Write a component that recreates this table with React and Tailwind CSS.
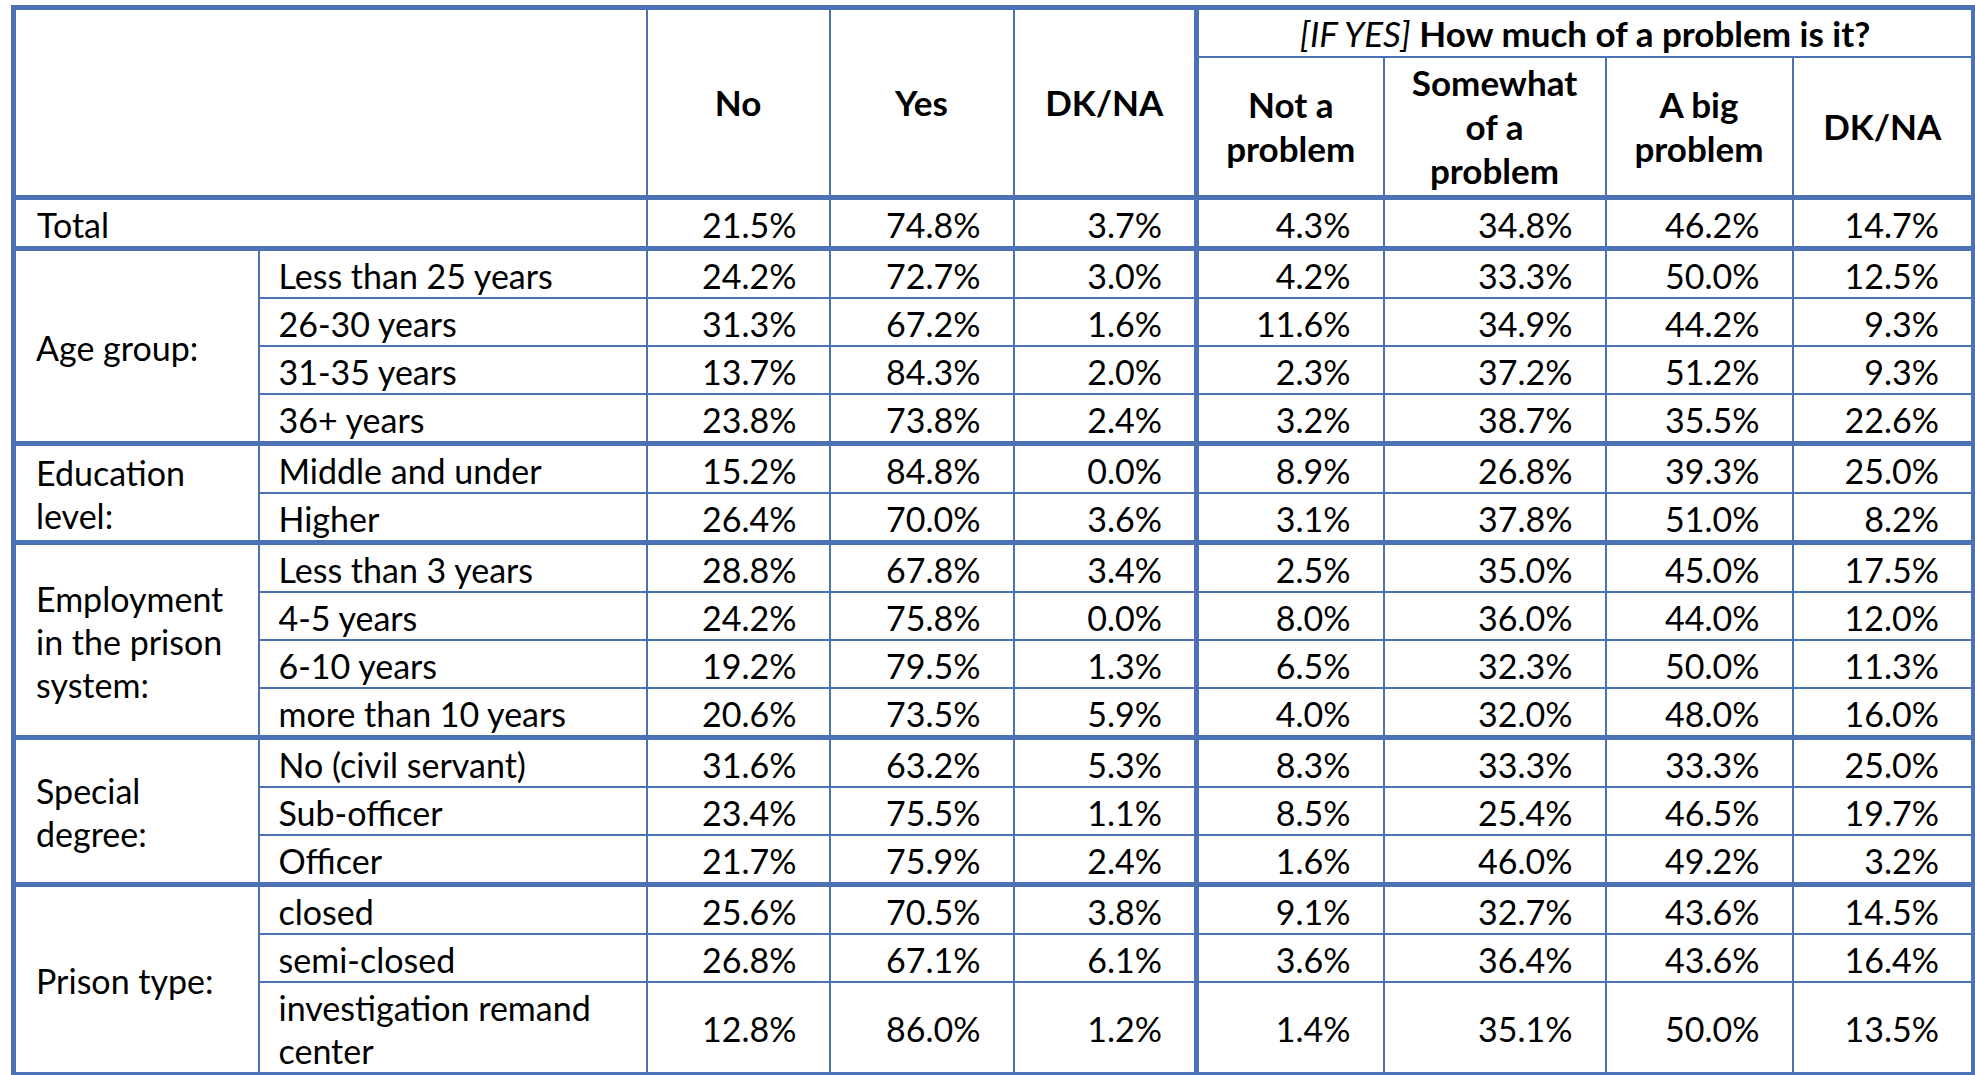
import React from "react";

const groups = [
  {
    label: ["Age group:"],
    rows: [
      ["Less than 25 years", "24.2%", "72.7%", "3.0%", "4.2%", "33.3%", "50.0%", "12.5%"],
      ["26-30 years", "31.3%", "67.2%", "1.6%", "11.6%", "34.9%", "44.2%", "9.3%"],
      ["31-35 years", "13.7%", "84.3%", "2.0%", "2.3%", "37.2%", "51.2%", "9.3%"],
      ["36+ years", "23.8%", "73.8%", "2.4%", "3.2%", "38.7%", "35.5%", "22.6%"],
    ],
  },
  {
    label: ["Education", "level:"],
    rows: [
      ["Middle and under", "15.2%", "84.8%", "0.0%", "8.9%", "26.8%", "39.3%", "25.0%"],
      ["Higher", "26.4%", "70.0%", "3.6%", "3.1%", "37.8%", "51.0%", "8.2%"],
    ],
  },
  {
    label: ["Employment", "in the prison", "system:"],
    rows: [
      ["Less than 3 years", "28.8%", "67.8%", "3.4%", "2.5%", "35.0%", "45.0%", "17.5%"],
      ["4-5 years", "24.2%", "75.8%", "0.0%", "8.0%", "36.0%", "44.0%", "12.0%"],
      ["6-10 years", "19.2%", "79.5%", "1.3%", "6.5%", "32.3%", "50.0%", "11.3%"],
      ["more than 10 years", "20.6%", "73.5%", "5.9%", "4.0%", "32.0%", "48.0%", "16.0%"],
    ],
  },
  {
    label: ["Special", "degree:"],
    rows: [
      ["No (civil servant)", "31.6%", "63.2%", "5.3%", "8.3%", "33.3%", "33.3%", "25.0%"],
      ["Sub-officer", "23.4%", "75.5%", "1.1%", "8.5%", "25.4%", "46.5%", "19.7%"],
      ["Officer", "21.7%", "75.9%", "2.4%", "1.6%", "46.0%", "49.2%", "3.2%"],
    ],
  },
  {
    label: ["Prison type:"],
    rows: [
      ["closed", "25.6%", "70.5%", "3.8%", "9.1%", "32.7%", "43.6%", "14.5%"],
      ["semi-closed", "26.8%", "67.1%", "6.1%", "3.6%", "36.4%", "43.6%", "16.4%"],
      [["investigation remand", "center"], "12.8%", "86.0%", "1.2%", "1.4%", "35.1%", "50.0%", "13.5%"],
    ],
  },
];

const total = ["21.5%", "74.8%", "3.7%", "4.3%", "34.8%", "46.2%", "14.7%"];

// cell base: thin blue rule, text sits a touch low on a 43px line
const cell = "border-2 border-[#4a72b5] px-0 pt-[3px] pb-0 leading-[43px]";
const num = `${cell} text-right pr-[32px]`;
const head = "border-2 border-[#4a72b5] px-0 py-px leading-[44px] font-bold text-center text-[35px]";

function Lines({ lines }) {
  return lines.map((l, i) => (
    <React.Fragment key={i}>
      {i > 0 && <br />}
      {l}
    </React.Fragment>
  ));
}

function NumCells({ values, first }) {
  return values.map((v, i) => (
    <td
      key={i}
      className={`${num} ${first ? "border-t-[5px]" : ""} ${i === 3 ? "border-l-[5px]" : ""}`}
    >
      {v}
    </td>
  ));
}

export default function App() {
  return (
    <div className="w-[1975px] h-[1075px] overflow-hidden bg-white pt-[5px] font-[Lato,sans-serif] text-[34px] text-black">
      <table className="ml-[11px] w-[1965px] table-fixed border-collapse border-[5px] border-[#4a72b5]">
        <colgroup>
          <col className="w-[245px]" />
          <col className="w-[388px]" />
          <col className="w-[183px]" />
          <col className="w-[184px]" />
          <col className="w-[183px]" />
          <col className="w-[187px]" />
          <col className="w-[222px]" />
          <col className="w-[187px]" />
          <col className="w-[181px]" />
        </colgroup>
        <thead>
          <tr>
            <td colSpan={2} rowSpan={2} className={`${head} border-b-[5px]`} />
            <th rowSpan={2} className={`${head} border-b-[5px]`}>No</th>
            <th rowSpan={2} className={`${head} border-b-[5px]`}>Yes</th>
            <th rowSpan={2} className={`${head} border-b-[5px]`}>DK/NA</th>
            <th colSpan={4} className={`${head} h-[48px] border-l-[5px]`}>
              <span className="italic font-normal">[IF YES]</span> How much of a problem is it?
            </th>
          </tr>
          <tr>
            <th className={`${head} h-[140px] border-b-[5px] border-l-[5px]`}>
              Not a<br />problem
            </th>
            <th className={`${head} border-b-[5px]`}>
              Somewhat<br />of a<br />problem
            </th>
            <th className={`${head} border-b-[5px]`}>
              A big<br />problem
            </th>
            <th className={`${head} border-b-[5px]`}>DK/NA</th>
          </tr>
        </thead>
        <tbody>
          <tr>
            <td colSpan={2} className={`${cell} pl-[21px] text-left`}>Total</td>
            <NumCells values={total} />
          </tr>
          {groups.map((g, gi) =>
            g.rows.map((r, ri) => (
              <tr key={`${gi}-${ri}`}>
                {ri === 0 && (
                  <td
                    rowSpan={g.rows.length}
                    className={`${cell} border-t-[5px] pl-[20px] text-left align-middle`}
                  >
                    <Lines lines={g.label} />
                  </td>
                )}
                <td className={`${cell} ${ri === 0 ? "border-t-[5px]" : ""} pl-[19px] text-left`}>
                  {Array.isArray(r[0]) ? <Lines lines={r[0]} /> : r[0]}
                </td>
                <NumCells values={r.slice(1)} first={ri === 0} />
              </tr>
            ))
          )}
        </tbody>
      </table>
    </div>
  );
}
